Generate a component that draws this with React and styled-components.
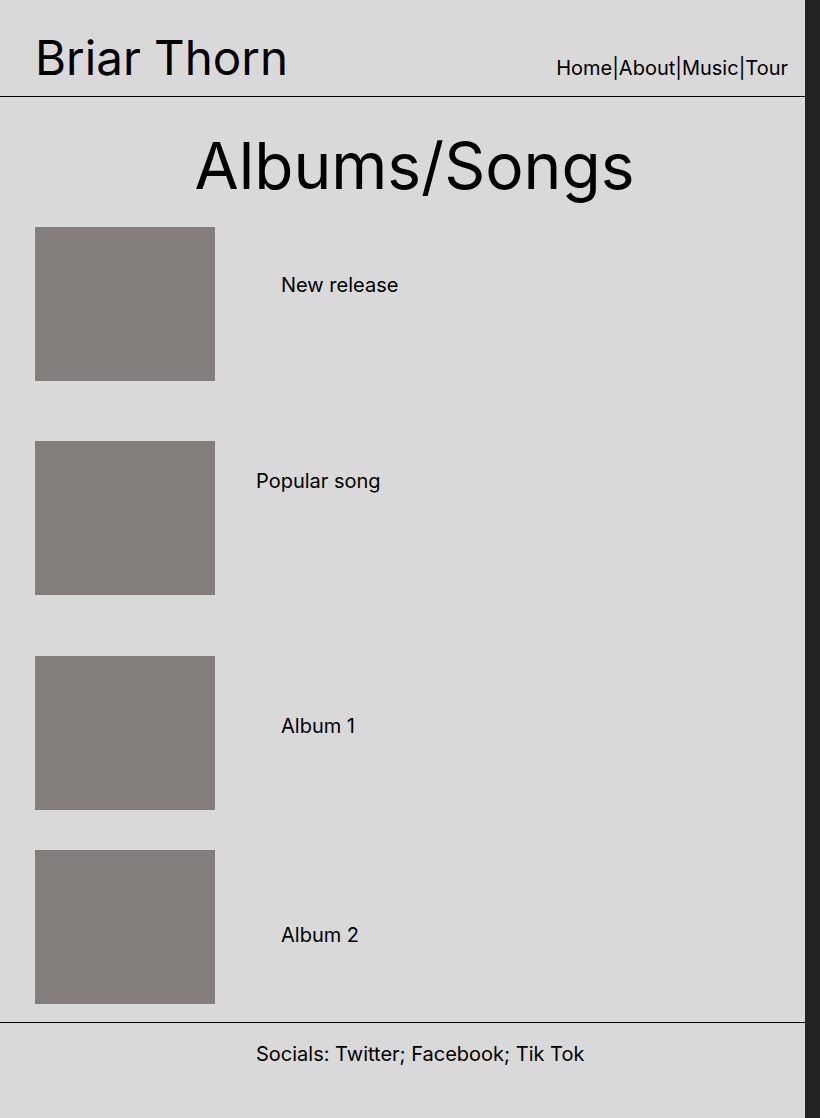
import React from 'react';
import styled, { createGlobalStyle } from 'styled-components';

const GlobalStyle = createGlobalStyle`
  body {
    margin: 0;
    background-color: #d9d9d9;
    font-family: Inter, "Noto Sans", sans-serif;
    color: #000;
  }
`;

const Page = styled.div`
  display: flex;
  min-height: 1118px;
  width: 820px;
`;

const Main = styled.div`
  width: 805px;
  display: flex;
  flex-direction: column;
`;

const SideBar = styled.div`
  width: 15px;
  background-color: #222222;
`;

const Header = styled.header`
  height: 97px;
  box-sizing: border-box;
  padding: 29px 17px 0 35px;
  display: flex;
  justify-content: space-between;
  align-items: baseline;
  border-bottom: 1px solid #000;
  width: 820px;
`;

const SiteTitle = styled.h1`
  margin: 0;
  font-size: 47.5px;
  font-weight: 400;
  line-height: 58px;
`;

const Nav = styled.nav`
  display: flex;
  align-items: baseline;
  font-size: 20px;
  margin-right: 15px;
`;

const NavLink = styled.a`
  color: #000;
  text-decoration: none;
`;

const Divider = styled.span`
  margin: 0;
`;

const PageHeading = styled.h2`
  margin: 30px 0 0;
  font-size: 64px;
  font-weight: 400;
  line-height: 77px;
  text-align: center;
  padding-left: 24px;
`;

const List = styled.section`
  display: flex;
  flex-direction: column;
  padding: 0 0 18px 35px;
`;

const Row = styled.div`
  display: flex;
  align-items: flex-start;
  margin-top: ${(p) => p.$gap}px;
`;

const Cover = styled.div`
  width: 180px;
  height: 154px;
  background-color: #837d7c;
  flex-shrink: 0;
`;

const Label = styled.span`
  font-size: 20px;
  line-height: 24px;
  margin-left: ${(p) => p.$left}px;
  margin-top: ${(p) => p.$top}px;
`;

const Footer = styled.footer`
  border-top: 1px solid #000;
  padding: 19px 0 40px 256px;
  font-size: 20px;
  line-height: 24px;
`;

const items = [
  { title: 'New release', gap: 23, left: 66, top: 46 },
  { title: 'Popular song', gap: 60, left: 41, top: 28 },
  { title: 'Album 1', gap: 61, left: 66, top: 58 },
  { title: 'Album 2', gap: 40, left: 66, top: 73 },
];

const navLinks = ['Home', 'About', 'Music', 'Tour'];

const App = () => {
  return (
    <>
      <GlobalStyle />
      <Page>
        <Main>
          <Header>
            <SiteTitle>Briar Thorn</SiteTitle>
            <Nav>
              {navLinks.map((link, i) => (
                <React.Fragment key={link}>
                  {i > 0 && <Divider>|</Divider>}
                  <NavLink href="#">{link}</NavLink>
                </React.Fragment>
              ))}
            </Nav>
          </Header>
          <PageHeading>Albums/Songs</PageHeading>
          <List>
            {items.map((item) => (
              <Row key={item.title} $gap={item.gap}>
                <Cover />
                <Label $left={item.left} $top={item.top}>{item.title}</Label>
              </Row>
            ))}
          </List>
          <Footer>Socials: Twitter; Facebook; Tik Tok</Footer>
        </Main>
        <SideBar />
      </Page>
    </>
  );
};

export default App;
